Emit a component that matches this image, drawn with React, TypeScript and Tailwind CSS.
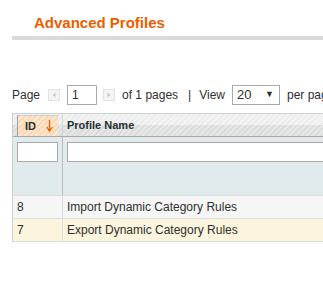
import React from 'react';

const rows = [
  { id: '8', name: 'Import Dynamic Category Rules', bg: 'bg-[#f6f6f6]' },
  { id: '7', name: 'Export Dynamic Category Rules', bg: 'bg-[#fcf5dd]' },
];

function PagerArrow({ dir }: { dir: 'left' | 'right' }) {
  return (
    <span className="flex h-[12px] w-[12px] items-center justify-center border border-[#e2e2e2] bg-[#f4f4f4]">
      <svg width="6" height="6" viewBox="0 0 6 6">
        {dir === 'left' ? <polygon points="4.5,0.5 4.5,5.5 1.5,3" fill="#c8c8c8" /> : <polygon points="1.5,0.5 1.5,5.5 4.5,3" fill="#c8c8c8" />}
      </svg>
    </span>
  );
}

export default function App() {
  return (
    <div className="w-[323px] h-[283px] overflow-hidden bg-white font-['Liberation_Sans',Arial,sans-serif] text-[12px] text-[#2f2f2f]">
      {/* Header */}
      <div className="pt-[14px] pl-[34px] text-[15px] leading-[17px] font-bold text-[#eb5e00]">Advanced Profiles</div>
      <div className="ml-[12px] mt-[5px] h-[4px] bg-[#dadada]" />

      {/* Pager */}
      <div className="mt-[45px] flex h-[20px] w-[400px] items-center pl-[12px] whitespace-nowrap">
        <span className="shrink-0">Page</span>
        <span className="ml-[8px] shrink-0"><PagerArrow dir="left" /></span>
        <input
          readOnly
          value="1"
          className="ml-[7px] h-[20px] w-[30px] shrink-0 border border-[#aaaaaa] px-[4px] text-[12px] text-[#2f2f2f] outline-none"
        />
        <span className="ml-[6px] shrink-0"><PagerArrow dir="right" /></span>
        <span className="ml-[7px] shrink-0">of 1 pages</span>
        <span className="ml-[10px] shrink-0">|</span>
        <span className="ml-[8px] shrink-0">View</span>
        <span className="ml-[7px] flex h-[20px] w-[48px] shrink-0 items-center justify-between border border-[#aaaaaa] pl-[4px] pr-[5px] text-[13px]">
          <span>20</span>
          <span className="text-[9px]">▼</span>
        </span>
        <span className="ml-[7px] shrink-0">per page</span>
      </div>

      {/* Grid */}
      <div className="mt-[8px] ml-[12px] w-[520px] border-l border-t border-[#cbd3d4]">
        <div className="flex h-[23px] bg-[linear-gradient(to_bottom,rgba(255,255,255,0.35)_0,rgba(255,255,255,0.35)_11px,rgba(0,0,0,0.03)_11px),repeating-linear-gradient(135deg,#e2e2e2_0,#e2e2e2_2px,#eeeeee_2px,#eeeeee_4px)] border-b border-[#a8a8a8]">
          <div className="w-[50px] border-r border-[#d6d6d6] pl-[4px] pt-[1px]">
            <div className="flex h-[21px] w-[41px] items-center justify-between border-l border-t border-l-[#a0a0a0] border-t-[#cfcfcf] pl-[7px] pr-[5px] bg-[repeating-linear-gradient(135deg,#fbd7b4_0,#fbd7b4_2px,#fde8d2_2px,#fde8d2_4px)]">
              <span className="text-[11px] font-bold text-[#253033]">ID</span>
              <svg width="7" height="14" viewBox="0 0 7 14">
                <line x1="3.5" y1="1" x2="3.5" y2="11" stroke="#eb5e00" strokeWidth="1.3" />
                <polyline points="0.8,8 3.5,12 6.2,8" fill="none" stroke="#eb5e00" strokeWidth="1.3" />
              </svg>
            </div>
          </div>
          <div className="flex flex-1 items-center pl-[4px] text-[11px] font-bold text-[#253033]">Profile Name</div>
        </div>

        <div className="flex h-[58px] bg-[#e1eaec]">
          <div className="w-[50px] border-r border-[#bcbcbc] pl-[4px] pt-[5px]">
            <div className="h-[20px] w-[41px] border border-[#aaaaaa] bg-white" />
          </div>
          <div className="flex-1 pl-[4px] pt-[5px]">
            <div className="h-[20px] w-full border border-[#aaaaaa] bg-white" />
          </div>
        </div>

        {rows.map((r) => (
          <div key={r.id} className={`flex h-[23px] border-t border-[#dadfe0] ${r.bg}`}>
            <div className="flex w-[50px] items-center border-r border-[#dadfe0] pl-[4px]">{r.id}</div>
            <div className="flex flex-1 items-center pl-[4px]">{r.name}</div>
          </div>
        ))}
        <div className="border-t border-[#dadfe0]" />
      </div>
    </div>
  );
}
